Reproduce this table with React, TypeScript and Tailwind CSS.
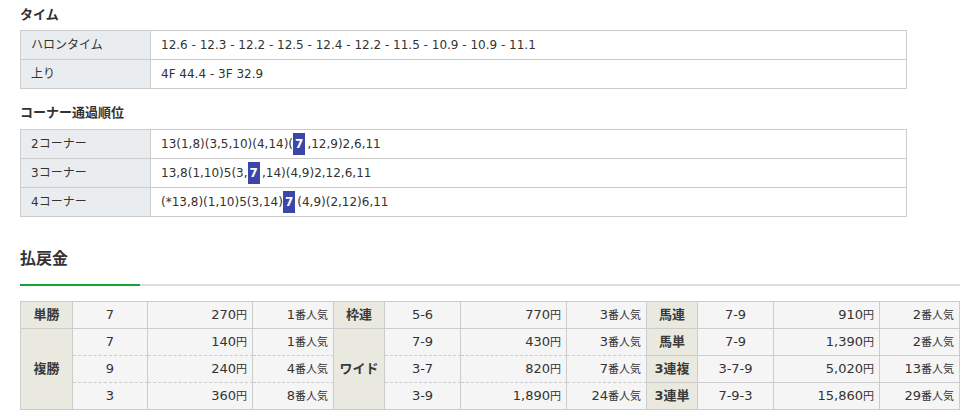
import React from "react";

const FONT = { fontFamily: '"DejaVu Sans", "Noto Sans CJK JP", sans-serif' };

function Hl({ n }: { n: string }) {
  return (
    <span className="inline-block bg-[#3a47a8] text-white font-bold px-[2px] leading-[22px] mr-[2px] align-middle">
      {n}
    </span>
  );
}

function InfoTable({ rows }: { rows: [string, React.ReactNode][] }) {
  return (
    <table className="w-[887px] border-collapse text-[12px] text-[#333]" style={{ tableLayout: "fixed" }}>
      <colgroup>
        <col style={{ width: 130 }} />
        <col />
      </colgroup>
      <tbody>
        {rows.map(([k, v], i) => (
          <tr key={i} className="h-[29px]">
            <td className="border border-[#cccccc] bg-[#eaedf0] px-[10px] py-0 align-middle">{k}</td>
            <td className="border border-[#cccccc] bg-white px-[10px] py-0 align-middle">{v}</td>
          </tr>
        ))}
      </tbody>
    </table>
  );
}

type Cell = {
  t: React.ReactNode;
  kind: "label" | "num" | "yen" | "pop";
  rs?: number;
  dashed?: boolean;
};

function Yen({ v }: { v: string }) {
  return (
    <>
      {v}
      <span className="text-[11px]">円</span>
    </>
  );
}
function Pop({ v }: { v: string }) {
  return (
    <>
      {v}
      <span className="text-[11px]">番人気</span>
    </>
  );
}

function PCell({ c }: { c: Cell }) {
  const base = "border-r border-b border-r-[#cccccc] border-b-[#cccccc] py-0 align-middle";
  let cls = "";
  if (c.kind === "label") cls = "bg-[#e9e9df] text-center font-bold text-[13px] text-[#3a3a3a]";
  else if (c.kind === "num") cls = "bg-[#f5f5f5] text-center text-[13px]";
  else cls = "bg-[#f5f5f5] text-right pr-[5px] text-[13px]";
  return (
    <td
      rowSpan={c.rs}
      className={`${base} ${cls}`}
      style={{ borderBottomStyle: c.dashed ? "dashed" : "solid", borderRightStyle: "solid" }}
    >
      {c.t}
    </td>
  );
}

export default function App() {
  const widths = [52, 75, 105, 81, 51, 76, 106, 80, 51, 76, 106, 80];
  const L = (t: string, rs?: number): Cell => ({ t, kind: "label", rs });
  const N = (t: string, dashed?: boolean): Cell => ({ t, kind: "num", dashed });
  const Y = (t: string, dashed?: boolean): Cell => ({ t: <Yen v={t} />, kind: "yen", dashed });
  const P = (t: string, dashed?: boolean): Cell => ({ t: <Pop v={t} />, kind: "pop", dashed });

  const rows: Cell[][] = [
    [L("単勝"), N("7"), Y("270"), P("1"), L("枠連"), N("5-6"), Y("770"), P("3"), L("馬連"), N("7-9"), Y("910"), P("2")],
    [L("複勝", 3), N("7", true), Y("140", true), P("1", true), L("ワイド", 3), N("7-9", true), Y("430", true), P("3", true), L("馬単"), N("7-9"), Y("1,390"), P("2")],
    [N("9", true), Y("240", true), P("4", true), N("3-7", true), Y("820", true), P("7", true), L("3連複"), N("3-7-9"), Y("5,020"), P("13")],
    [N("3"), Y("360"), P("8"), N("3-9"), Y("1,890"), P("24"), L("3連単"), N("7-9-3"), Y("15,860"), P("29")],
  ];

  return (
    <div className="bg-white w-[977px] h-[420px] overflow-hidden text-[#333]" style={FONT}>
      <div className="px-[20px]">
        <h3 className="text-[13px] font-bold leading-[20px] pt-[5px] pb-[5px]">タイム</h3>
        <InfoTable
          rows={[
            ["ハロンタイム", "12.6 - 12.3 - 12.2 - 12.5 - 12.4 - 12.2 - 11.5 - 10.9 - 10.9 - 11.1"],
            ["上り", "4F 44.4 - 3F 32.9"],
          ]}
        />
        <h3 className="text-[13px] font-bold leading-[20px] pt-[14px] pb-[6px]">コーナー通過順位</h3>
        <InfoTable
          rows={[
            ["2コーナー", <>13(1,8)(3,5,10)(4,14)(<Hl n="7" />,12,9)2,6,11</>],
            ["3コーナー", <>13,8(1,10)5(3,<Hl n="7" />,14)(4,9)2,12,6,11</>],
            ["4コーナー", <>(*13,8)(1,10)5(3,14)<Hl n="7" />(4,9)(2,12)6,11</>],
          ]}
        />
        <div className="mt-[30px] w-[940px] border-b-2 border-[#dddddd] relative">
          <h2 className="text-[16px] font-bold leading-[24px] pb-[13px]">払戻金</h2>
          <div className="absolute left-0 bottom-[-2px] w-[120px] h-[2px] bg-[#16a534]" />
        </div>
        <table
          className="mt-[15px] w-[940px] border-separate border-t border-l border-[#cccccc]"
          style={{ tableLayout: "fixed", borderSpacing: 0 }}
        >
          <colgroup>
            {widths.map((w, i) => (
              <col key={i} style={{ width: w }} />
            ))}
          </colgroup>
          <tbody>
            {rows.map((r, i) => (
              <tr key={i} className="h-[27px]">
                {r.map((c, j) => (
                  <PCell key={j} c={c} />
                ))}
              </tr>
            ))}
          </tbody>
        </table>
      </div>
    </div>
  );
}
